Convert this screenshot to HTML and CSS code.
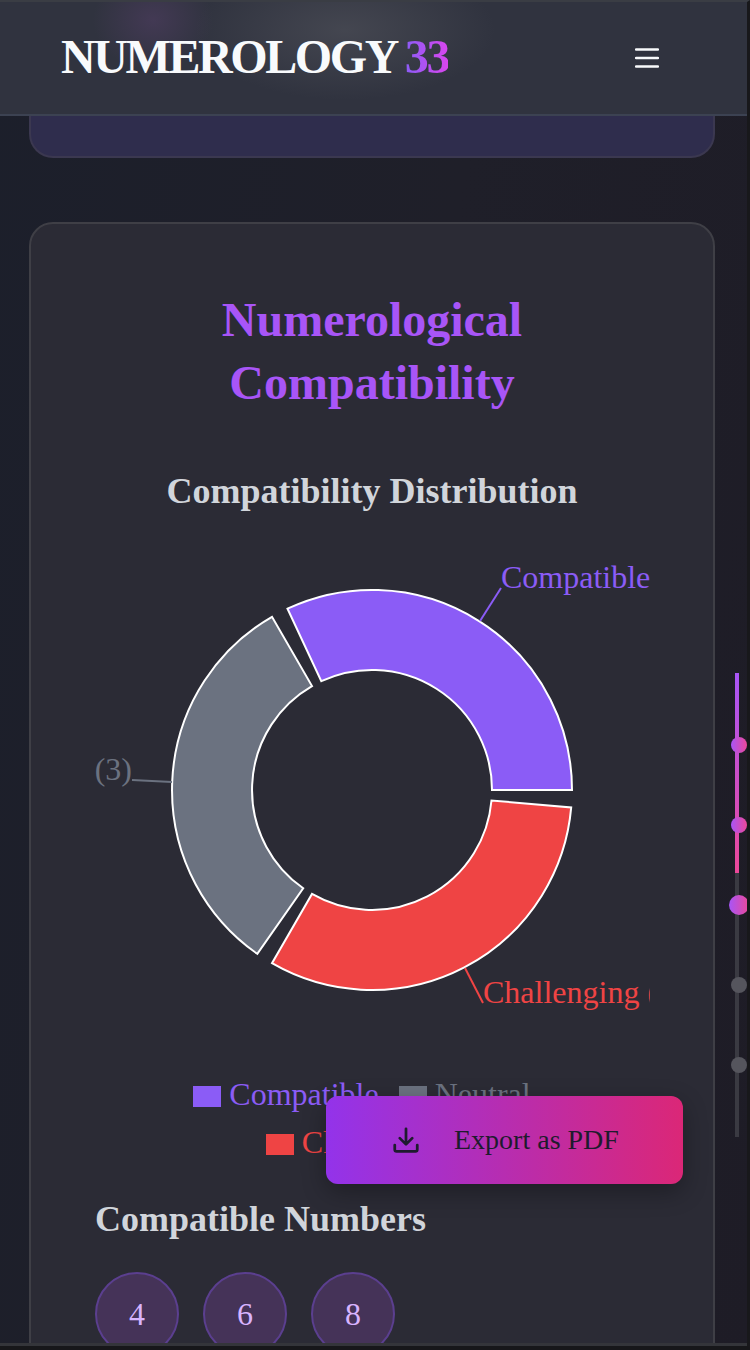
FILE: index.html
```html
<!DOCTYPE html>
<html lang="en">

<head>
    <meta charset="UTF-8" />
    <meta name="viewport" content="width=device-width, initial-scale=1.0" />
    <title>Numerology 33</title>
    <link rel="stylesheet" href="styles.css">
</head>

<body>
    <div class="page">
        <header class="topbar">
            <a class="logo" href="#">NUMEROLOGY <span class="logo-num">33</span></a>
            <button class="menu-btn" aria-label="Menu">
                <svg width="24" height="20" viewBox="0 0 24 20">
                    <path d="M1 1.5H23M1 10H23M1 18.5H23" stroke="#f8fafc" stroke-width="2.4" stroke-linecap="round" fill="none" />
                </svg>
            </button>
        </header>

        <main class="content">
            <div class="card-prev"></div>

            <section class="card">
                <h2 class="card-title">Numerological<br>Compatibility</h2>
                <h3 class="chart-title">Compatibility Distribution</h3>

                <svg class="donut" width="555" height="500" viewBox="0 0 555 500">
                    <g transform="translate(277 250)" stroke="#fff" stroke-width="2">
                        <path fill="#8b5cf6" d="M-84.5 -181.3A200 200 0 0 1 200 0L120 0A120 120 0 0 0 -50.7 -108.8Z" />
                        <path fill="#ef4444" d="M199.2 17.4A200 200 0 0 1 -100 173.2L-60 103.9A120 120 0 0 0 119.5 10.5Z" />
                        <path fill="#6b7280" d="M-114.7 163.8A200 200 0 0 1 -100 -173.2L-60 -103.9A120 120 0 0 0 -68.8 98.3Z" />
                    </g>
                    <path d="M385 81L406 48" stroke="#8b5cf6" stroke-width="2" fill="none" />
                    <path d="M370 428L388 463" stroke="#ef4444" stroke-width="2" fill="none" />
                    <path d="M37 240L77 242" stroke="#6b7280" stroke-width="2" fill="none" />
                    <text class="slice-label" x="406" y="48" fill="#8b5cf6">Compatible (3)</text>
                    <text class="slice-label" x="388" y="463" fill="#ef4444">Challenging (3)</text>
                    <text class="slice-label" x="37" y="240" fill="#6b7280" text-anchor="end">Neutral (3)</text>
                </svg>

                <ul class="legend">
                    <li class="legend-item compat"><span class="swatch"></span>Compatible</li>
                    <li class="legend-item neutral"><span class="swatch"></span>Neutral</li>
                    <li class="legend-item hard"><span class="swatch"></span>Challenging</li>
                </ul>

                <h3 class="numbers-title">Compatible Numbers</h3>
                <div class="numbers">
                    <span class="num">4</span>
                    <span class="num">6</span>
                    <span class="num">8</span>
                </div>
            </section>
        </main>

        <div class="progress">
            <div class="progress-fill"></div>
            <span class="dot dot-1"></span>
            <span class="dot dot-2"></span>
            <span class="dot dot-3"></span>
            <span class="dot dot-4"></span>
            <span class="dot dot-5"></span>
        </div>

        <button class="export-btn">
            <svg width="30" height="30" viewBox="0 0 24 24" fill="none" stroke="#1e1b2e" stroke-width="2.2" stroke-linecap="round" stroke-linejoin="round">
                <path d="M12 3V15M7 10.5L12 15.5L17 10.5M3 16V19.5A1.5 1.5 0 0 0 4.5 21H19.5A1.5 1.5 0 0 0 21 19.5V16" />
            </svg>
            Export as PDF
        </button>

        <div class="frame"></div>
    </div>
</body>

</html>
```

FILE: styles.css
```css
* {
    box-sizing: border-box;
}

html,
body {
    margin: 0;
    padding: 0;
    height: 100%;
    overflow: hidden;
}

body {
    font-family: "Liberation Serif", "Times New Roman", serif;
    background: #1e1e28;
}

.page {
    position: relative;
    width: 750px;
    height: 1350px;
    overflow: hidden;
    background: linear-gradient(100deg, #1c1f2b 0%, #1f1f29 50%, #1e1c26 100%);
}

/* header */
.topbar {
    position: relative;
    z-index: 5;
    height: 116px;
    padding: 0 91px 2px 61px;
    display: flex;
    align-items: center;
    justify-content: space-between;
    border-bottom: 2px solid #3c4252;
    background:
        radial-gradient(ellipse 60px 50px at 153px 20px, rgba(90, 65, 110, 0.45), transparent),
        radial-gradient(ellipse 150px 70px at 345px 30px, rgba(120, 120, 125, 0.28), transparent),
        #30333f;
}

.logo {
    font-size: 48px;
    font-weight: bold;
    letter-spacing: -2.4px;
    color: #f8fafc;
    text-decoration: none;
}

.logo-num {
    background: linear-gradient(90deg, #8b5cf6, #d946ef);
    -webkit-background-clip: text;
    background-clip: text;
    color: transparent;
}

.menu-btn {
    padding: 0;
    margin-top: 4px;
    border: none;
    background: none;
    display: flex;
}

/* cards */
.content {
    padding: 0 35px 0 29px;
}

.card-prev {
    height: 43px;
    margin-top: -1px;
    background: #2f2d4d;
    border: 2px solid #3b3850;
    border-top: none;
    border-radius: 0 0 24px 24px;
}

.card {
    margin-top: 64px;
    padding: 64px 64px;
    background: #2b2b35;
    border: 2px solid #3f3f46;
    border-radius: 24px;
}

.card-title {
    margin: 0 0 55px;
    font-size: 48px;
    line-height: 63px;
    font-weight: bold;
    text-align: center;
    color: #a855f7;
}

.chart-title {
    margin: 0 0 27px;
    font-size: 36px;
    line-height: 44px;
    font-weight: bold;
    text-align: center;
    color: #d1d5db;
}

.donut {
    display: block;
}

.slice-label {
    font-size: 32px;
}

/* legend */
.legend {
    margin: 0;
    padding: 0;
    list-style: none;
    display: flex;
    flex-wrap: wrap;
    justify-content: center;
    font-size: 32px;
    line-height: 48px;
    margin-top: 30px;
}

.legend-item {
    display: flex;
    align-items: center;
    margin-right: 20px;
}

.swatch {
    width: 28px;
    height: 21px;
    margin-right: 8px;
    margin-top: 5px;
}

.compat {
    color: #8b5cf6;
}

.compat .swatch {
    background: #8b5cf6;
}

.neutral {
    color: #6b7280;
}

.neutral .swatch {
    background: #6b7280;
}

.hard {
    color: #ef4444;
}

.hard .swatch {
    background: #ef4444;
}

.numbers-title {
    margin: 31px 0 31px;
    font-size: 36px;
    line-height: 44px;
    font-weight: bold;
    color: #d1d5db;
}

.numbers {
    display: flex;
    gap: 24px;
}

.num {
    width: 84px;
    height: 84px;
    border-radius: 50%;
    display: flex;
    align-items: center;
    justify-content: center;
    font-size: 32px;
    color: #d8b4fe;
    background: #453358;
    border: 2px solid #5b3f8f;
}

/* side progress */
.progress {
    position: absolute;
    left: 735px;
    top: 673px;
    width: 4px;
    height: 464px;
    background: #3a3a42;
}

.progress-fill {
    height: 200px;
    background: linear-gradient(180deg, #a855f7, #ec4899);
}

.dot {
    position: absolute;
    left: -4px;
    width: 16px;
    height: 16px;
    border-radius: 50%;
    background: #55555d;
}

.dot-1,
.dot-2,
.dot-3 {
    background: linear-gradient(90deg, #a855f7, #ec4899);
}

.dot-1 {
    top: 64px;
}

.dot-2 {
    top: 144px;
}

.dot-3 {
    left: -6px;
    top: 222px;
    width: 20px;
    height: 20px;
}

.dot-4 {
    top: 304px;
}

.dot-5 {
    top: 384px;
}

/* export button */
.export-btn {
    position: absolute;
    left: 326px;
    top: 1096px;
    width: 357px;
    height: 88px;
    padding: 0 0 0 65px;
    display: flex;
    align-items: center;
    gap: 33px;
    border: none;
    border-radius: 12px;
    font-family: inherit;
    font-size: 28px;
    color: #1e1b2e;
    background: linear-gradient(90deg, #9333ea, #db2777);
    box-shadow: 0 8px 24px rgba(0, 0, 0, 0.3);
}

/* window edge */
.frame {
    position: absolute;
    inset: 0;
    z-index: 10;
    pointer-events: none;
    border-right: 3px solid #18181b;
    border-bottom: 4px solid #17171a;
    border-top: 2px solid #3a3d44;
    box-shadow: inset 0 -3px 0 #34353a;
}
```
